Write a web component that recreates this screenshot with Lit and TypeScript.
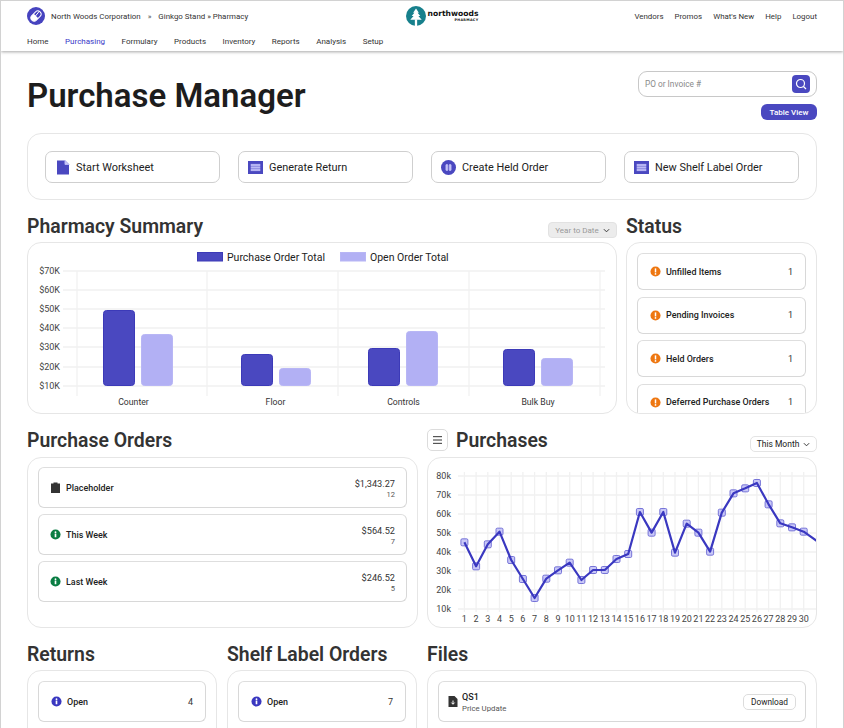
import { LitElement, html, css, svg } from "lit";
import { customElement } from "lit/decorators.js";

const infoIcon = (cls: string) => html`<svg class="ico ${cls}" viewBox="0 0 12 12"><circle cx="6" cy="6" r="5.5"></circle><rect class="w" x="5.1" y="5" width="1.8" height="4" ></rect><circle class="w" cx="6" cy="3.5" r="1"></circle></svg>`;
const warnIcon = () => html`<svg class="ico orange" viewBox="0 0 12 12"><circle cx="6" cy="6" r="5.5"></circle><rect class="w" x="5.2" y="2.6" width="1.6" height="4.4"></rect><circle class="w" cx="6" cy="8.7" r="0.95"></circle></svg>`;
const listIcon = () => html`<svg class="act-ico" viewBox="0 0 15 15"><rect class="p" x="0" y="1" width="15" height="13"></rect><rect class="l" x="3.2" y="4.4" width="8.6" height="1.2"></rect><rect class="l" x="3.2" y="6.9" width="8.6" height="1.2"></rect><rect class="l" x="3.2" y="9.4" width="8.6" height="1.2"></rect></svg>`;
const docIcon = () => html`<svg class="act-ico" viewBox="0 0 15 15"><path class="p" d="M2 0.5H10L14 4.5V14.5H2Z"></path><path class="l" d="M10 0.5L14 4.5H10Z"></path></svg>`;
const pauseIcon = () => html`<svg class="act-ico" viewBox="0 0 15 15"><circle class="p" cx="7.5" cy="7.5" r="7.5"></circle><rect class="l" x="5" y="4.5" width="1.7" height="6" rx=".5"></rect><rect class="l" x="8.3" y="4.5" width="1.7" height="6" rx=".5"></rect></svg>`;
const chevron = () => html`<svg class="chev" viewBox="0 0 8 5"><path d="M1 1L4 4L7 1"></path></svg>`;

const barLines = [271, 290, 309, 328, 347, 367, 386];
const barLabels = ["$70K", "$60K", "$50K", "$40K", "$30K", "$20K", "$10K"];
const barCols = [77, 207, 338, 469, 600];
const bars: [number, number, string][] = [
  [103, 310, "d"], [141, 334, "l"], [241, 354, "d"], [279, 368, "l"],
  [368, 348, "d"], [406, 331, "l"], [503, 349, "d"], [541, 358, "l"],
];
const barNames: [number, string][] = [[133.5, "Counter"], [275.5, "Floor"], [403.5, "Controls"], [538, "Bulk Buy"]];

const lineY = [352,424,358,320,405,462,519,461,436,413,465,435,435,402,387,261,323,261,383,296,323,380,263,205,190,174,238,295,307,320].map((v) => 425 + v / 3);
const lineX = lineY.map((_, i) => 464.4 + i * 11.7);
const yTicks = [80, 70, 60, 50, 40, 30, 20, 10];
const poly = lineX.map((x, i) => `${x},${lineY[i]}`).join(" ") + " 817,541";

@customElement("app-root")
export class AppRoot extends LitElement {
  static styles = css`
    :host { display: block; width: 844px; height: 728px; overflow: hidden; box-sizing: border-box; border: 1px solid #d2d2d2; border-bottom: 0; background: #fff; font-family: Roboto, sans-serif; color: #222; position: relative; }
    * { box-sizing: border-box; }
    header { height: 50px; padding: 0 26px; box-shadow: 0 1px 3px rgba(0,0,0,.35); position: relative; background: #fff; }
    .top { display: grid; grid-template-columns: 1fr auto 1fr; height: 29px; align-items: center; padding-top: 1px; font-size: 7.9px; color: #333; }
    .crumb { display: flex; align-items: center; }
    .mark { width: 18px; height: 18px; margin-right: 6px; }
    .sep { margin: 0 7px; color: #555; }
    .logo { display: flex; align-items: center; margin-left: 40px; }
    .logo svg { width: 20px; height: 20px; margin-right: 2px; }
    .logo-t { display: flex; flex-direction: column; align-items: flex-end; line-height: 1; color: #111; }
    .lg1 { font-family: "DejaVu Sans", sans-serif; font-weight: 700; font-size: 7.6px; }
    .lg2 { font-family: "DejaVu Sans", sans-serif; font-weight: 700; font-size: 3.4px; letter-spacing: .3px; margin-top: 1px; }
    .links { display: flex; justify-content: flex-end; gap: 11px; }
    nav { display: flex; gap: 16.5px; font-size: 8px; color: #333; padding-top: 7px; }
    nav .on { color: #3a38c8; }

    main { padding: 0 26px; }
    .hero { display: flex; justify-content: space-between; height: 82px; padding-top: 20px; }
    h1 { margin: 0; font-size: 33px; line-height: 50px; font-weight: 600; color: #1d1d1d; }
    .tools { display: flex; flex-direction: column; align-items: flex-end; gap: 7px; }
    .search { width: 179px; height: 26px; border: 1px solid #c8c8c8; border-radius: 9px; display: flex; align-items: center; justify-content: space-between; padding: 0 6px; }
    .search input { border: 0; outline: 0; font: 8.3px Roboto, sans-serif; width: 120px; padding: 0; color: #777; }
    .search input::placeholder { color: #8a8a8a; }
    .sbtn { width: 18px; height: 18px; border-radius: 4px; background: #4a48c0; display: flex; align-items: center; justify-content: center; }
    .sbtn svg { width: 12px; height: 12px; fill: none; stroke: #fff; stroke-width: 1.2; }
    .tv { width: 56px; height: 16px; border-radius: 6px; background: #4a48c0; color: #fff; font-size: 8px; font-weight: 500; display: flex; align-items: center; justify-content: center; }

    .card { border: 1px solid #e6e6e6; border-radius: 14px; background: #fff; overflow: hidden; }
    .actions { height: 67px; padding: 17px; display: grid; grid-template-columns: repeat(4, 175px); gap: 18px; }
    .act { height: 32px; border: 1px solid #cfcfcf; border-radius: 7px; display: flex; align-items: center; gap: 6px; padding-left: 9px; font-size: 10.9px; color: #222; }
    .act-ico { width: 15px; height: 15px; flex: none; }
    .act-ico .p { fill: #4a48c0; }
    .act-ico .l { fill: #cfcef5; }

    .r1, .r2, .r3 { display: grid; gap: 9px; margin-top: 16px; }
    .r1 { grid-template-columns: 590px 191px; }
    .r2 { grid-template-columns: 391px 390px; }
    .r3 { grid-template-columns: 190px 190px 390px; gap: 10px; }
    .head { height: 26px; display: flex; align-items: flex-end; justify-content: space-between; padding-bottom: 4px; }
    .r2 .head { height: 27px; padding-bottom: 5px; }
    h2 { margin: 0; font-size: 19.4px; font-weight: 600; line-height: 22px; color: #333; }
    .hl { display: flex; align-items: center; gap: 8px; }
    .menu { width: 21px; height: 22px; border: 1px solid #dcdcdc; border-radius: 5px; display: flex; align-items: center; justify-content: center; margin-bottom: 1px; }
    .menu svg { width: 9px; height: 8px; fill: #555; }
    .drop { height: 16px; border-radius: 4px; font-size: 8px; display: flex; align-items: center; justify-content: center; gap: 4px; }
    .drop.g { width: 69px; background: #ececec; border: 1px solid #e2e2e2; color: #999; }
    .drop.w { width: 67px; background: #fff; border: 1px solid #e4e4e4; color: #222; border-radius: 5px; font-size: 8.5px; }
    .chev { width: 7px; height: 5px; fill: none; stroke: #333; stroke-width: 1.1; }

    .c172 { height: 172px; display: block; }
    .c171 { height: 171px; display: block; }
    .chart { display: block; }
    .gl { stroke: #f1f1f1; stroke-width: 1.3; fill: none; }
    .lab { font: 9px Roboto, sans-serif; fill: #444; }
    .blab { font: 8.7px Roboto, sans-serif; fill: #333; }
    .leg { font: 10.5px Roboto, sans-serif; fill: #222; }
    .d { fill: #4a48c0; stroke: #3c3ab8; }
    .l { fill: #b2b0f4; stroke: #b8b6f5; }
    .ln { fill: none; stroke: #3a38c0; stroke-width: 2.2; stroke-linejoin: round; }
    .pt { fill: #c9c8f7; stroke: #6a68d4; stroke-width: .9; }

    .pad { padding: 10px; display: flex; flex-direction: column; }
    .st { gap: 6.5px; }
    .po { gap: 6px; padding-top: 9px; }
    .row { flex: none; border: 1px solid #d8d8d8; border-top-color: #dedede; border-radius: 6px; display: flex; align-items: center; justify-content: space-between; padding: 0 12px; background: #fff; }
    .st .row { height: 37px; }
    .po .row, .r3 .row { height: 41px; }
    .po .row { padding: 0 11px; }
    .name { display: flex; align-items: center; gap: 5px; font-size: 8.95px; font-weight: 500; color: #222; }
    .num { font-size: 9px; color: #333; }
    .ico { width: 11px; height: 11px; flex: none; }
    .ico.orange { fill: #ee7711; }
    .ico.green { fill: #0a7d43; }
    .ico.blue { fill: #3a38c0; }
    .ico .w { fill: #fff; }
    .clip { width: 11px; height: 11px; fill: #333; flex: none; }
    .amt { text-align: right; padding-top: 2px; }
    .a1 { font-size: 9.2px; color: #333; line-height: 12px; }
    .a2 { font-size: 7.5px; color: #555; line-height: 10px; }
    .file { width: 10px; height: 11px; flex: none; fill: #333; }
    .frow { padding-left: 9px; }
    .fname { gap: 4px; }
    .ftext { padding-top: 3px; }
    .fn { font-size: 9px; font-weight: 500; line-height: 12px; }
    .fs { font-size: 7.8px; font-weight: 400; color: #555; line-height: 12px; }
    .dl { width: 53px; height: 16px; border: 1px solid #dcdcdc; border-radius: 5px; font-size: 8.3px; color: #222; display: flex; align-items: center; justify-content: center; margin-right: -3px; }
    .r3 .card { height: 90px; }
  `;

  render() {
    return html`
      <header>
        <div class="top">
          <div class="crumb">
            <svg class="mark" viewBox="0 0 18 18"><circle cx="9" cy="9" r="9" fill="#4643bf"></circle><g transform="rotate(-45 9 9)"><rect x="3.2" y="5.8" width="11.6" height="6.4" rx="3.2" fill="none" stroke="#fff" stroke-width="1"></rect><path d="M9 5.8H6.4A3.2 3.2 0 0 0 6.4 12.2H9Z" fill="#fff"></path></g><path d="M12.5 4L6 12" stroke="#fff" stroke-width="1"></path></svg>
            <span>North Woods Corporation</span><span class="sep">»</span><span>Ginkgo Stand » Pharmacy</span>
          </div>
          <div class="logo">
            <svg viewBox="0 0 21 21"><circle cx="10.5" cy="10.5" r="10.5" fill="#17808c"></circle><path d="M10.5 2.5L13.5 7H12.2L15 10.6H13L16.5 14.5H4.5L8 10.6H6L8.8 7H7.5Z" fill="#fff"></path><rect x="9.3" y="14" width="2.4" height="7" fill="#fff"></rect></svg>
            <div class="logo-t"><span class="lg1">northwoods</span><span class="lg2">PHARMACY</span></div>
          </div>
          <div class="links"><span>Vendors</span><span>Promos</span><span>What's New</span><span>Help</span><span>Logout</span></div>
        </div>
        <nav><span>Home</span><span class="on">Purchasing</span><span>Formulary</span><span>Products</span><span>Inventory</span><span>Reports</span><span>Analysis</span><span>Setup</span></nav>
      </header>
      <main>
        <div class="hero">
          <h1>Purchase Manager</h1>
          <div class="tools">
            <div class="search"><input placeholder="PO or Invoice #" /><div class="sbtn"><svg viewBox="0 0 12 12"><circle cx="5.5" cy="5.5" r="4"></circle><path d="M8.5 8.5L11 11"></path></svg></div></div>
            <div class="tv">Table View</div>
          </div>
        </div>
        <div class="card actions">
          <div class="act">${docIcon()}Start Worksheet</div>
          <div class="act">${listIcon()}Generate Return</div>
          <div class="act">${pauseIcon()}Create Held Order</div>
          <div class="act">${listIcon()}New Shelf Label Order</div>
        </div>

        <div class="r1">
          <section>
            <div class="head"><h2>Pharmacy Summary</h2><div class="drop g">Year to Date ${chevron()}</div></div>
            <div class="card c172">${this.barChart()}</div>
          </section>
          <section>
            <div class="head"><h2>Status</h2></div>
            <div class="card c172 pad st">
              ${["Unfilled Items", "Pending Invoices", "Held Orders", "Deferred Purchase Orders"].map(
                (t) => html`<div class="row"><span class="name">${warnIcon()}${t}</span><span class="num">1</span></div>`
              )}
            </div>
          </section>
        </div>

        <div class="r2">
          <section>
            <div class="head"><h2>Purchase Orders</h2></div>
            <div class="card c171 pad po">
              <div class="row"><span class="name"><svg class="clip" viewBox="0 0 11 11"><path d="M1 1.5H3.5V.5H7.5V1.5H10V11H1Z"></path></svg>Placeholder</span><div class="amt"><div class="a1">$1,343.27</div><div class="a2">12</div></div></div>
              <div class="row"><span class="name">${infoIcon("green")}This Week</span><div class="amt"><div class="a1">$564.52</div><div class="a2">7</div></div></div>
              <div class="row"><span class="name">${infoIcon("green")}Last Week</span><div class="amt"><div class="a1">$246.52</div><div class="a2">5</div></div></div>
            </div>
          </section>
          <section>
            <div class="head">
              <div class="hl"><div class="menu"><svg viewBox="0 0 9 8"><rect y="0" width="9" height="1.2"></rect><rect y="3.4" width="9" height="1.2"></rect><rect y="6.8" width="9" height="1.2"></rect></svg></div><h2>Purchases</h2></div>
              <div class="drop w">This Month ${chevron()}</div>
            </div>
            <div class="card c171">${this.lineChart()}</div>
          </section>
        </div>

        <div class="r3">
          <section>
            <div class="head"><h2>Returns</h2></div>
            <div class="card pad"><div class="row"><span class="name">${infoIcon("blue")}Open</span><span class="num">4</span></div></div>
          </section>
          <section>
            <div class="head"><h2>Shelf Label Orders</h2></div>
            <div class="card pad"><div class="row"><span class="name">${infoIcon("blue")}Open</span><span class="num">7</span></div></div>
          </section>
          <section>
            <div class="head"><h2>Files</h2></div>
            <div class="card pad"><div class="row frow"><span class="name fname"><svg class="file" viewBox="0 0 10 11"><path d="M0.5 0H6.5L9.5 3V11H0.5Z"></path><path d="M5 4.5V8M3.4 6.6L5 8.3L6.6 6.6" fill="none" stroke="#fff"></path></svg><span class="ftext"><div class="fn">QS1</div><div class="fs">Price Update</div></span></span><div class="dl">Download</div></div></div>
          </section>
        </div>
      </main>
    `;
  }

  barChart() {
    return html`<svg class="chart" width="588" height="170" viewBox="28 243 588 170">
      ${barLines.map((y) => svg`<line class="gl" x1="63" x2="605" y1=${y} y2=${y}></line>`)}
      ${barCols.map((x) => svg`<line class="gl" x1=${x} x2=${x} y1="271" y2="396"></line>`)}
      ${barLabels.map((t, i) => svg`<text class="lab" x="60" y=${barLines[i] + 3} text-anchor="end">${t}</text>`)}
      ${bars.map(([x, y, c]) => svg`<rect class=${c} x=${x + 0.5} y=${y + 0.5} width="31" height=${385 - y} rx="3"></rect>`)}
      ${barNames.map(([x, t]) => svg`<text class="blab" x=${x} y="405" text-anchor="middle">${t}</text>`)}
      <rect class="d" x="197.5" y="252.5" width="25" height="8.5"></rect>
      <text class="leg" x="227" y="260.5">Purchase Order Total</text>
      <rect class="l" x="340.5" y="252.5" width="25" height="8.5"></rect>
      <text class="leg" x="370" y="260.5">Open Order Total</text>
    </svg>`;
  }

  lineChart() {
    return html`<svg class="chart" width="388" height="169" viewBox="428 458 388 169">
      ${yTicks.map((v, i) => svg`<line class="gl" x1="458" x2="817" y1=${476 + i * 19} y2=${476 + i * 19}></line>`)}
      ${lineX.map((x) => svg`<line class="gl" x1=${x} x2=${x} y1="472" y2="612"></line>`)}
      ${yTicks.map((v, i) => svg`<text class="lab" x="451" y=${479 + i * 19} text-anchor="end">${v}k</text>`)}
      ${lineX.map((x, i) => svg`<text class="lab" x=${x} y="622" text-anchor="middle">${i + 1}</text>`)}
      ${lineX.map((x, i) => svg`<rect class="pt" x=${x - 3.5} y=${lineY[i] - 3.5} width="7" height="7" rx="1.3"></rect>`)}
      <polyline class="ln" points=${poly}></polyline>
    </svg>`;
  }
}
